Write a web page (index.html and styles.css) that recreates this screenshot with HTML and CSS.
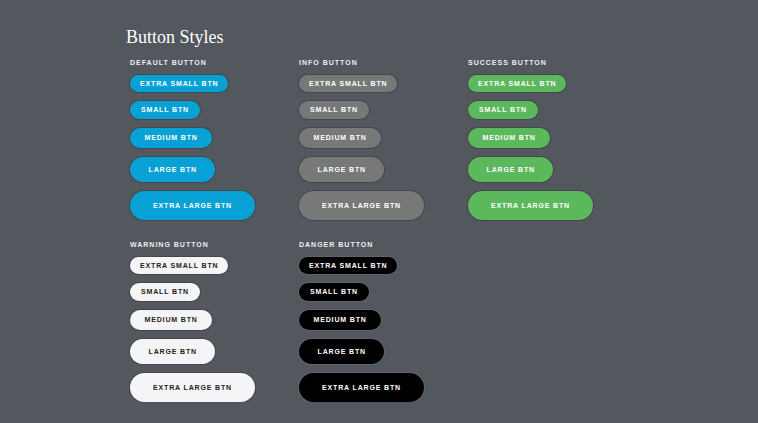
FILE: index.html
```html
<!DOCTYPE html>
<html lang="en">
<head>
    <meta charset="UTF-8">
    <meta name="viewport" content="width=device-width, initial-scale=1.0">
    <title>Button Styles</title>
    <link rel="stylesheet" href="styles.css">
</head>
<body>
    <div class="page">
        <h1 class="title">Button Styles</h1>
        <div class="groups">
            <div class="group">
                <span class="group-label">Default Button</span>
                <a class="btn btn-default btn-xs">Extra Small Btn</a>
                <a class="btn btn-default btn-sm">Small Btn</a>
                <a class="btn btn-default btn-md">Medium Btn</a>
                <a class="btn btn-default btn-lg">Large Btn</a>
                <a class="btn btn-default btn-xl">Extra Large Btn</a>
            </div>
            <div class="group">
                <span class="group-label">Info Button</span>
                <a class="btn btn-info btn-xs">Extra Small Btn</a>
                <a class="btn btn-info btn-sm">Small Btn</a>
                <a class="btn btn-info btn-md">Medium Btn</a>
                <a class="btn btn-info btn-lg">Large Btn</a>
                <a class="btn btn-info btn-xl">Extra Large Btn</a>
            </div>
            <div class="group">
                <span class="group-label">Success Button</span>
                <a class="btn btn-success btn-xs">Extra Small Btn</a>
                <a class="btn btn-success btn-sm">Small Btn</a>
                <a class="btn btn-success btn-md">Medium Btn</a>
                <a class="btn btn-success btn-lg">Large Btn</a>
                <a class="btn btn-success btn-xl">Extra Large Btn</a>
            </div>
            <div class="group">
                <span class="group-label">Warning Button</span>
                <a class="btn btn-warning btn-xs">Extra Small Btn</a>
                <a class="btn btn-warning btn-sm">Small Btn</a>
                <a class="btn btn-warning btn-md">Medium Btn</a>
                <a class="btn btn-warning btn-lg">Large Btn</a>
                <a class="btn btn-warning btn-xl">Extra Large Btn</a>
            </div>
            <div class="group">
                <span class="group-label">Danger Button</span>
                <a class="btn btn-danger btn-xs">Extra Small Btn</a>
                <a class="btn btn-danger btn-sm">Small Btn</a>
                <a class="btn btn-danger btn-md">Medium Btn</a>
                <a class="btn btn-danger btn-lg">Large Btn</a>
                <a class="btn btn-danger btn-xl">Extra Large Btn</a>
            </div>
        </div>
    </div>
</body>
</html>
```

FILE: styles.css
```css
*, *::before, *::after {
    box-sizing: border-box;
}
body {
    margin: 0;
    background: #53575e;
    font-family: "Liberation Sans", Arial, sans-serif;
}
.page {
    padding: 26px 0 0 126px;
}
.title {
    margin: 0;
    font-family: "Liberation Serif", "Times New Roman", serif;
    font-size: 18px;
    font-weight: normal;
    line-height: 22px;
    color: #fff;
}
.groups {
    display: grid;
    grid-template-columns: repeat(3, 169px);
    row-gap: 20px;
    margin: 10px 0 0 4px;
}
.group {
    display: flex;
    flex-direction: column;
    align-items: flex-start;
    gap: 9px;
}
.group-label {
    font-size: 7px;
    font-weight: bold;
    line-height: 10px;
    letter-spacing: 1px;
    text-transform: uppercase;
    color: #eceef0;
    margin-bottom: -2px;
}

/* buttons */
.btn {
    display: inline-block;
    border-radius: 999px;
    font-size: 7px;
    font-weight: bold;
    letter-spacing: 0.85px;
    text-transform: uppercase;
    text-align: center;
    color: #fff;
    box-shadow: 0 0 0 1px rgba(0, 0, 0, 0.18);
    white-space: nowrap;
}
.btn-xs { height: 17px; line-height: 17px; padding: 0 10px; }
.btn-sm { height: 18px; line-height: 18px; padding: 0 11px; }
.btn-md { height: 20px; line-height: 20px; padding: 0 14.5px; }
.btn-lg { height: 25px; line-height: 25px; padding: 0 18.5px; }
.btn-xl { height: 29px; line-height: 29px; padding: 0 23px; }

.btn-default { background: #07a1d5; }
.btn-info { background: #777878; }
.btn-success { background: #5cb85c; }
.btn-warning { background: #f5f5f7; color: #1c1c1c; }
.btn-danger { background: #000; box-shadow: 0 0 0 1px rgba(255, 255, 255, 0.08); }
```
